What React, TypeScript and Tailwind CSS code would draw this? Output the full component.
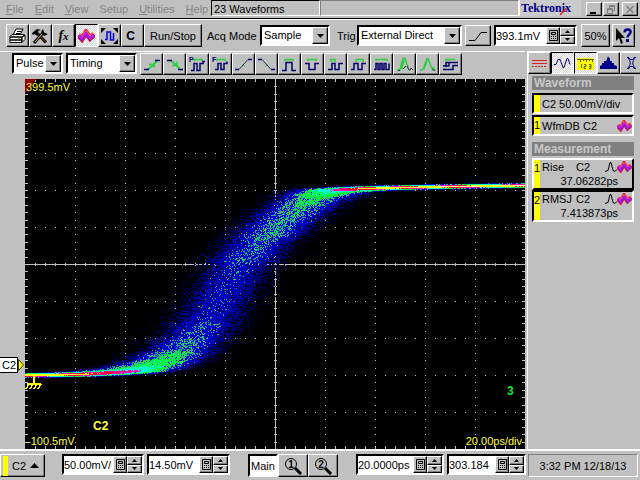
import type { ReactNode } from 'react';
import clsx from 'clsx';

const RAISED = 'border border-t-white border-l-white border-r-black border-b-black shadow-[inset_-1px_-1px_#808080] bg-[#c0c0c0]';
const SUNKEN = 'border-2 border-t-black border-l-black border-r-white border-b-white';
const PRESSED =
  'border border-t-black border-l-black border-r-white border-b-white bg-[repeating-conic-gradient(#ffffff_0_25%,#d4d4d4_0_50%)] bg-[length:2px_2px]';

const PLOT_W = 500;
const PLOT_H = 370;

// Mean edge shape in plot coordinates
const EDGE: [number, number][] = [
  [-80, 297], [0, 296], [55, 295], [88, 293], [108, 291], [124, 287], [139, 281], [154, 272],
  [169, 258], [181, 243], [191, 226], [202, 207], [216, 184], [236, 161], [252, 147], [265, 136],
  [278, 126], [292, 117], [306, 112], [322, 110], [342, 109], [380, 108], [430, 107], [500, 106], [600, 106],
];

const LEVELS: { min: number; color: string }[] = [
  { min: 180, color: '#ffffc0' },
  { min: 122, color: '#ffff00' },
  { min: 90, color: '#ff0028' },
  { min: 58, color: '#ff00b0' },
  { min: 27, color: '#00ffd0' },
  { min: 14, color: '#00f838' },
  { min: 9, color: '#30b080' },
  { min: 5, color: '#0000e4' },
  { min: 3, color: '#0000ac' },
  { min: 2, color: '#000080' },
  { min: 1, color: '#000058' },
];

function edgeAt(x: number) {
  const i = EDGE.findIndex(([px]) => px > x);
  if (i < 0) return EDGE[EDGE.length - 1][1];
  if (i === 0) return EDGE[0][1];
  const [x0, y0] = EDGE[i - 1];
  const [x1, y1] = EDGE[i];
  return y0 + ((y1 - y0) * (x - x0)) / (x1 - x0);
}

function buildWaveform() {
  let seed = 20131218;
  const random = () => {
    seed = (Math.imul(seed, 1664525) + 1013904223) >>> 0;
    return (seed + 1) / 4294967297;
  };
  const gauss = () => Math.sqrt(-2 * Math.log(random())) * Math.cos(2 * Math.PI * random());

  const paths = LEVELS.map(() => '');
  for (let x = 0; x < PLOT_W; x++) {
    const hits = new Array(PLOT_H).fill(0);
    for (let n = 0; n < 420; n++) {
      const y = Math.round(edgeAt(x + gauss() * 18) + gauss() * 0.8);
      if (y >= 0 && y < PLOT_H) hits[y]++;
    }
    hits.forEach((hit, y) => {
      const count = hit < 16 ? hit * (0.5 + random()) : hit;
      const level = LEVELS.findIndex((l) => count >= l.min);
      if (level >= 0) paths[level] += `M${x} ${y}h1v1h-1z`;
    });
  }
  return paths;
}

function buildGrid() {
  let d = '';
  for (let i = 1; i < 10; i++) {
    for (let j = 1; j < 50; j++) {
      d += `M${j * 10} ${i * 37}h1v1h-1z`;
      d += `M${i * 50} ${Math.round(j * 7.4)}h1v1h-1z`;
    }
  }
  for (let j = 1; j < 50; j++) {
    const x = j * 10;
    const y = Math.round(j * 7.4);
    d += `M${x} 0h1v3h-1zM${x} 367h1v3h-1zM${x} 184h1v3h-1z`;
    d += `M0 ${y}h3v1h-3zM497 ${y}h3v1h-3zM249 ${y}h3v1h-3z`;
  }
  return d + 'M0 185h500v1h-500zM250 0h1v370h-1z';
}

const waveform = buildWaveform();
const grid = buildGrid();

function Plot() {
  return (
    <svg viewBox="0 0 500 370" className="block min-w-0 flex-1 aspect-[500/370] bg-black font-['Liberation_Sans',Arial,sans-serif]">
      <g shapeRendering="crispEdges">
        <path d={grid} fill="#c0c0c0" />
        <path d="M0 0h11L0 15z" fill="#900000" />
        {waveform.map((d, i) => (
          <path key={LEVELS[i].color} d={d} fill={LEVELS[i].color} />
        ))}
        <path d="M0 296h24M9 296v9M2 305h14M4 305l-3 5M8 305l-3 5M12 305l-3 5M16 305l-3 5" stroke="#ffff00" strokeWidth="1.5" fill="none" />
      </g>
      <g fill="#ffff40" fontSize="11">
        <text x="1" y="12">399.5mV</text>
        <text x="2" y="366">-100.5mV</text>
        <text x="497" y="366" textAnchor="end">20.00ps/div</text>
        <text x="68" y="351" fontSize="12" fontWeight="bold">C2</text>
      </g>
      <text x="482" y="316" fontSize="12" fontWeight="bold" fill="#00f020">3</text>
    </svg>
  );
}

interface ToolButtonProps {
  label: string;
  pressed?: boolean;
  className?: string;
  children: ReactNode;
}

function ToolButton({ label, pressed, className = 'w-[23px] h-[22px]', children }: ToolButtonProps) {
  return (
    <button aria-label={label} className={clsx('flex shrink-0 items-center justify-center', pressed ? PRESSED : RAISED, className)}>
      {children}
    </button>
  );
}

function Icon({ children, w = 19, h = 18 }: { children: ReactNode; w?: number; h?: number }) {
  return (
    <svg width={w} height={h} viewBox={`0 0 ${w} ${h}`} fill="none" aria-hidden="true" className="shrink-0">
      {children}
    </svg>
  );
}

function ColorWave({ w = 17, h = 14 }: { w?: number; h?: number }) {
  return (
    <svg width={w} height={h} viewBox="0 0 17 14" fill="none" aria-hidden="true" className="shrink-0">
      <path d="M1 6l3 4 4-7 4 6 4-4" stroke="#f01838" strokeWidth="5" />
      <path d="M1 8l3 3 4-6 4 5 4-3" stroke="#f01838" strokeWidth="4" />
      <path d="M1 6l3 4 4-6 4 5 4-3" stroke="#b818e8" strokeWidth="3" />
      <path d="M1 4l3 3 3-5h2l3 5 3-4" stroke="#ffb020" strokeWidth="1" strokeDasharray="1 1" />
      <path d="M1 9l3 3 4-6 4 6 4-4" stroke="#3020e0" strokeWidth="1" strokeDasharray="2 1" />
    </svg>
  );
}

interface DropDownProps {
  label: string;
  value: string;
  className: string;
}

function DropDown({ label, value, className }: DropDownProps) {
  return (
    <div className={clsx('relative h-[21px] shrink-0 bg-white', SUNKEN, className)}>
      <select aria-label={label} className="block h-full w-full appearance-none bg-white pl-0.5 leading-none outline-none">
        <option>{value}</option>
      </select>
      <span className={clsx('pointer-events-none absolute inset-y-0 right-0 flex w-4 items-center justify-center', RAISED)}>
        <Icon w={7} h={4}>
          <path d="M0 0h7L3.5 4z" fill="#000" />
        </Icon>
      </span>
    </div>
  );
}

function NumberField({ label, value, className }: DropDownProps) {
  return (
    <div className={clsx('flex h-[21px] shrink-0 bg-white', SUNKEN, className)}>
      <input aria-label={label} defaultValue={value} className="h-full min-w-0 flex-1 bg-white outline-none" />
      <ToolButton label={`${label} keypad`} className="w-[14px] h-full">
        <Icon w={9} h={11}>
          <path d="M.5 .5h8v10h-8zM2.5 2.5h4v2h-4z" stroke="#000" />
          <path d="M2 6h1v1h-1zM4 6h1v1h-1zM6 6h1v1h-1zM2 8h1v1h-1zM4 8h1v1h-1zM6 8h1v1h-1z" fill="#000" />
        </Icon>
      </ToolButton>
      <div className="flex w-[15px] flex-col">
        <ToolButton label={`${label} up`} className="w-full flex-1">
          <Icon w={5} h={3}><path d="M0 3h5L2.5 0z" fill="#000" /></Icon>
        </ToolButton>
        <ToolButton label={`${label} down`} className="w-full flex-1">
          <Icon w={5} h={3}><path d="M0 0h5L2.5 3z" fill="#000" /></Icon>
        </ToolButton>
      </div>
    </div>
  );
}

const menus = ['File', 'Edit', 'View', 'Setup', 'Utilities', 'Help'];

function MenuBar() {
  return (
    <header className="flex h-[19px] items-stretch border-b border-black">
      <nav className="flex w-[211px] shrink-0 items-center gap-[11px] pl-1.5 text-[#858585]">
        {menus.map((menu) => (
          <button key={menu}>
            <span className={menu === 'Setup' ? '' : 'underline'}>{menu[0]}</span>
            {menu.slice(1)}
          </button>
        ))}
      </nav>
      <div className="flex h-4 w-[109px] shrink-0 items-center border border-t-black border-l-black border-r-white border-b-white pt-0.5 pl-0.5">
        23 Waveforms
      </div>
      <div className="h-4 flex-1 border border-t-[#808080] border-l-[#808080] border-r-white border-b-white" />
      <div className="relative flex h-4 w-[62px] shrink-0 items-center border-l border-white bg-[#cacaca] pl-px font-['Liberation_Serif',serif] text-[12px] font-bold text-[#000088]">
        Tektronix
        <svg width="8" height="8" viewBox="0 0 8 8" aria-hidden="true" className="absolute top-2 left-10">
          <path d="M0 7l7-7" stroke="#e02020" strokeWidth="1.5" />
        </svg>
      </div>
      <div className="flex shrink-0 items-center gap-px pr-0.5 pl-[5px]">
        <ToolButton label="Minimize" className="h-3.5 w-4">
          <Icon w={10} h={9}><path d="M1 7h6v2h-6z" fill="#000" /></Icon>
        </ToolButton>
        <ToolButton label="Restore" className="h-3.5 w-4">
          <Icon w={10} h={9}><path d="M3.5 3V.5h5v5H7M3 1.5h6M1.5 3.5h5v5h-5zM1 4.5h6" stroke="#808080" /></Icon>
        </ToolButton>
        <ToolButton label="Close" className="ml-0.5 h-3.5 w-4">
          <Icon w={10} h={9}><path d="M1.5 1l7 7M8.5 1l-7 7" stroke="#808080" strokeWidth="1.5" /></Icon>
        </ToolButton>
      </div>
    </header>
  );
}

function AcquisitionBar() {
  return (
    <div className="flex h-8 items-center border-t border-white pl-1.5">
      <ToolButton label="Print" className="w-[23px] h-[23px]">
        <Icon>
          <path d="M5 8l3-6h7l-3 6" fill="#fff" stroke="#000" />
          <path d="M9 4.500h4M8 6.500h4" stroke="#000" />
          <path d="M2 9.500l2-2h11l2 1v4l-3 3h-12z" fill="#fff" stroke="#000" />
          <path d="M2 10h12l3-2M2 13h12M14 10v5" stroke="#000" strokeWidth="1.500" />
          <path d="M10 11.500h2" stroke="#c0b000" />
        </Icon>
      </ToolButton>
      <ToolButton label="Tools" className="w-[23px] h-[23px]">
        <Icon>
          <path d="M15 15.500L7 7" stroke="#000" strokeWidth="3" />
          <path d="M15 15.500L7 7" stroke="#a05000" />
          <path d="M1 6l5-4 4 1-3 1 1 3-2 2-2-2-2 1z" fill="#000" />
          <path d="M3 16l9-10" stroke="#000" strokeWidth="3" />
          <path d="M4 15l8-9" stroke="#d0c080" />
          <path d="M12 2l-2 3 3 4 4-2-3-1-1-1z" fill="#000" />
        </Icon>
      </ToolButton>
      <ToolButton label="Math" className="w-[23px] h-[23px]">
        <span className="font-['Liberation_Serif',serif] text-[14px] font-bold italic leading-none">f<span className="text-[11px]">x</span></span>
      </ToolButton>
      <ToolButton label="Waveform database" pressed className="w-[23px] h-[23px]">
        <ColorWave />
      </ToolButton>
      <ToolButton label="Autoset" className="w-[23px] h-[23px]">
        <Icon>
          <path d="M5 12.500h2V5h3.500v8h3V6" stroke="#0000e0" strokeWidth="1.500" />
          <path d="M1 1h5L1 6zM18 1h-5l5 5zM1 17h5l-5-5zM18 17h-5l5-5z" fill="#000" />
        </Icon>
      </ToolButton>
      <ToolButton label="Clear" className="w-[23px] h-[23px]">
        <span className="pr-1 text-[12px] font-bold">C</span>
      </ToolButton>
      <button className={clsx('h-[23px] w-[58px] shrink-0', RAISED)}>Run/Stop</button>
      <span className="w-[58px] shrink-0 pl-[5px]">Acq Mode</span>
      <DropDown label="Acquisition mode" value="Sample" className="w-[70px]" />
      <span className="w-[27px] shrink-0 pl-[7px]">Trig</span>
      <DropDown label="Trigger source" value="External Direct" className="w-[105px]" />
      <ToolButton label="Trigger slope" className="mx-[3px] w-[26px] h-[21px]">
        <Icon w={20} h={16}><path d="M1 12.500h6l6-8h6" stroke="#000" /></Icon>
      </ToolButton>
      <NumberField label="Trigger level" value="393.1mV" className="w-[83px]" />
      <button className={clsx('ml-1 h-[23px] w-[29px] shrink-0', RAISED)}>50%</button>
      <ToolButton label="Help" className="ml-0.5 w-[23px] h-[23px]">
        <Icon>
          <path d="M2 1v13l3-3 2 6 2-1-2-5h4z" fill="#000" />
          <path d="M10.500 5.500c0-4 7-4 6 0-.5 2-3 2-3 5" stroke="#000088" strokeWidth="2.500" />
          <path d="M12 12h3v3h-3z" fill="#000088" />
        </Icon>
      </ToolButton>
    </div>
  );
}

interface MeasureIcon {
  label: string;
  green?: string;
  navy?: string;
  black?: string;
  gray?: string;
  letter?: string;
}

const measureIcons: MeasureIcon[] = [
  { label: 'Rise', navy: 'M2 14.500h5M13 5.500h5', green: 'M5 14.500l4-3 6-6M6 14.500l5-4 4-4M7 9.500h5v3' },
  { label: 'Fall', navy: 'M2 5.500h5M13 14.500h5', green: 'M5 5.500l4 3 6 6M6 5.500l5 4 4 4M7 10.500h5v-4' },
  { label: 'Period', letter: 'P', green: 'M6 6V4.500h8V6', navy: 'M3 15.500h3v-7h3v7h3v-7h3v-2h2' },
  { label: 'Frequency', letter: 'F', green: 'M6 6V4.500h8V6', navy: 'M4 14.500h3v-6h3v6h3v-6h3v-2' },
  { label: 'Positive cross', navy: 'M1 14.500h4M14 4.500h4', black: 'M5 14.500l9-10', gray: 'M8 9.500l3 2' },
  { label: 'Negative cross', navy: 'M1 4.500h4M14 14.500h4', black: 'M5 4.500l9 10', gray: 'M8 11.500l3-2' },
  { label: 'Positive width', green: 'M5 6V4.500h8V6', navy: 'M2 15.500h4v-8h6v8h4' },
  { label: 'Negative width', green: 'M5 6V4.500h8V6', navy: 'M2 8.500h4v6h6v-6h4' },
  { label: 'Positive duty', green: 'M5 7V4.500h4V7', navy: 'M2 14.500h4v-6h3v6h4v-6h4' },
  { label: 'Negative duty', green: 'M7 7V4.500h7V7', navy: 'M2 14.500h3v-6h4v6h4v-6h4' },
  { label: 'Burst', green: 'M4 6V4.500h11V6', navy: 'M2 14.500h2v-6h2v6h2v-6h2v6h2v-6h2v6h3v-6' },
  { label: 'Overshoot', green: 'M2 15.500l3-1 3-11h2l3 9M3 15l4-2 2-8', black: 'M3 15.500h2M8 14l3-3M12 11l2 4h1l1-2 2 2' },
  { label: 'Undershoot', green: 'M2 15.500l3-1 4-11h1l4 10 1-1 2 3M3 15l3-1 3-8', black: 'M14 14.500l3 1' },
  { label: 'Phase', green: 'M5 6V4.500h9', navy: 'M5 12V7.500h12M2 14.500h10v-4h5M8 8v3H2' },
];

function MeasurementBar() {
  return (
    <div className="flex h-7 items-start border-t border-white pt-px pl-3">
      <DropDown label="Signal type" value="Pulse" className="mr-[3px] w-[51px]" />
      <DropDown label="Category" value="Timing" className="mr-[3px] w-[71px]" />
      <div className="flex">
        {measureIcons.map((icon) => (
          <ToolButton key={icon.label} label={icon.label}>
            <Icon>
              <path d={icon.green} stroke="#28d040" strokeWidth="1.500" />
              <path d={icon.gray} stroke="#50b070" />
              <path d={icon.navy} stroke="#000068" strokeWidth="1.500" />
              <path d={icon.black} stroke="#203840" />
              <text x="1" y="7" fontSize="7" fontWeight="bold" fill="#000070">{icon.letter}</text>
            </Icon>
          </ToolButton>
        ))}
      </div>
    </div>
  );
}

function Heading({ children }: { children: ReactNode }) {
  return <h2 className="h-3.5 bg-[#808080] pl-0.5 text-[12px] font-bold leading-[14px] text-[#c8c8c8]">{children}</h2>;
}

interface ReadoutProps {
  index?: string;
  name: string;
  source?: string;
  value?: string;
  wave?: boolean;
  selected?: boolean;
}

function Readout({ index, name, source, value, wave, selected }: ReadoutProps) {
  return (
    <button
      className={clsx(
        'flex w-full border-2 text-left',
        value ? 'h-8' : 'h-[21px]',
        selected ? 'border-t-white border-l-white border-r-black border-b-black' : 'border-t-black border-l-black border-r-white border-b-white',
      )}
    >
      <span className="h-full w-1.5 shrink-0 bg-[#ffff00] leading-4">{index}</span>
      <span className="flex h-full min-w-0 flex-1 flex-col justify-center pl-0.5">
        <span className="flex items-center">
          <span className={source ? 'w-[34px]' : ''}>{name}</span>
          <span>{source}</span>
          <span className="ml-auto flex items-center">
            {source && (
              <Icon w={13} h={12}><path d="M1 10.500l3-1 2-8h1l2 8 2 1 2-2" stroke="#000" /></Icon>
            )}
            {wave && <ColorWave w={15} h={12} />}
          </span>
        </span>
        {value && <span className="pr-3.5 text-right leading-[14px]">{value}</span>}
      </span>
    </button>
  );
}

function SidePanel() {
  return (
    <aside className="ml-0.5 w-[113px] shrink-0 overflow-hidden border-t border-l border-white">
      <div className="flex">
        <ToolButton label="Vertical">
          <Icon>
            <path d="M2 6.500h15M2 9.500h15" stroke="#e02020" />
            <path d="M2 12.500h15" stroke="#e02020" strokeDasharray="2 1" />
          </Icon>
        </ToolButton>
        <ToolButton label="Waveforms" pressed>
          <Icon><path d="M1 10.500h2l2-5h2l3 8h1l3-9h1l2 6" stroke="#000070" /></Icon>
        </ToolButton>
        <ToolButton label="Measurements" pressed>
          <Icon>
            <path d="M1 4h17v12h-17z" fill="#ffff00" />
            <path d="M1 5.500h17M4.500 5v3M7.500 5v2M10.500 5v3M13.500 5v2M16.500 5v3M5.500 10v4M8 10.500h2v2h-2v2h2M13 10.500h2v4h-2M13 12.500h2" stroke="#606000" />
          </Icon>
        </ToolButton>
        <ToolButton label="Histogram">
          <Icon><path d="M1 15v-3l2-1V9h2V7h2v1l2-6 1 2h1v3h2v2h2v2l3 1v3z" fill="#000088" /></Icon>
        </ToolButton>
        <ToolButton label="Mask">
          <Icon>
            <path d="M5 3.500h2l1 2h3l1-2h2M5 14.500h2l1-2h3l1 2h2M6 4c3 4 3 6 0 10M13 4c-3 4-3 6 0 10" stroke="#000070" />
          </Icon>
        </ToolButton>
      </div>
      <div className="mr-1.5 ml-1 mt-0.5 flex flex-col gap-px">
        <Heading>Waveform</Heading>
        <div className="mt-0.5 flex flex-col gap-px">
          <Readout name="C2 50.00mV/div" />
          <Readout index="1" name="WfmDB C2" wave />
        </div>
        <div className="mt-[5px] flex flex-col gap-0.5">
          <Heading>Measurement</Heading>
          <div>
            <Readout index="1" name="Rise" source="C2" value="37.06282ps" wave selected />
            <Readout index="2" name="RMSJ" source="C2" value="7.413873ps" wave />
          </div>
        </div>
      </div>
    </aside>
  );
}

function Magnifier({ digit }: { digit: string }) {
  return (
    <Icon w={20} h={18}>
      <circle cx="8" cy="7" r="5.500" stroke="#000" />
      <path d="M12 11l6 6" stroke="#000" strokeWidth="3" />
      <text x="8" y="11" fontSize="10" fontWeight="bold" textAnchor="middle" fill="#000">{digit}</text>
    </Icon>
  );
}

function StatusBar() {
  return (
    <footer className="flex h-[31px] items-start border-t-2 border-white pt-[3px]">
      <button className={clsx('flex h-[23px] w-[45px] shrink-0 items-center', RAISED)}>
        <span className="ml-0.5 h-5 w-[5px] bg-[#ffff00]" />
        <span className="w-[22px] text-center">C2</span>
        <Icon w={9} h={5}><path d="M0 5h9L4.500 0z" fill="#000" /></Icon>
      </button>
      <NumberField label="Vertical scale" value="50.00mV/" className="ml-[17px] w-[82px]" />
      <NumberField label="Vertical offset" value="14.50mV" className="ml-[3px] w-[83px]" />
      <button className={clsx('ml-[18px] h-[23px] w-[30px] shrink-0 bg-white', SUNKEN)}>Main</button>
      <ToolButton label="Magnify 1" className="h-[23px] w-[30px]"><Magnifier digit="1" /></ToolButton>
      <ToolButton label="Magnify 2" className="h-[23px] w-[30px]"><Magnifier digit="2" /></ToolButton>
      <NumberField label="Horizontal scale" value="20.0000ps" className="ml-[18px] w-[88px]" />
      <NumberField label="Horizontal position" value="303.184" className="ml-[3px] w-[79px]" />
      <div className="ml-[2px] mr-0.5 flex h-[23px] flex-1 items-center justify-center border border-t-[#808080] border-l-[#808080] border-r-white border-b-white whitespace-nowrap">
        3:32 PM 12/18/13
      </div>
    </footer>
  );
}

export default function App() {
  return (
    <div className="flex w-full flex-col overflow-hidden bg-[#c0c0c0] font-['Liberation_Sans',Arial,sans-serif] text-[11px] leading-[14px] text-black">
      <MenuBar />
      <AcquisitionBar />
      <main className="flex">
        <div className="min-w-0 flex-1">
          <MeasurementBar />
          <div className="flex">
            <div className="relative w-[25px] shrink-0">
              <div className="absolute top-[75%] left-0 flex items-center">
                <span className="h-4 w-[18px] border border-l-0 border-black bg-white pl-0.5">C2</span>
                <Icon w={6} h={12}><path d="M.5 .5l5 5.500-5 5.500z" fill="#ffff00" stroke="#404000" /></Icon>
              </div>
            </div>
            <Plot />
          </div>
        </div>
        <SidePanel />
      </main>
      <StatusBar />
    </div>
  );
}
